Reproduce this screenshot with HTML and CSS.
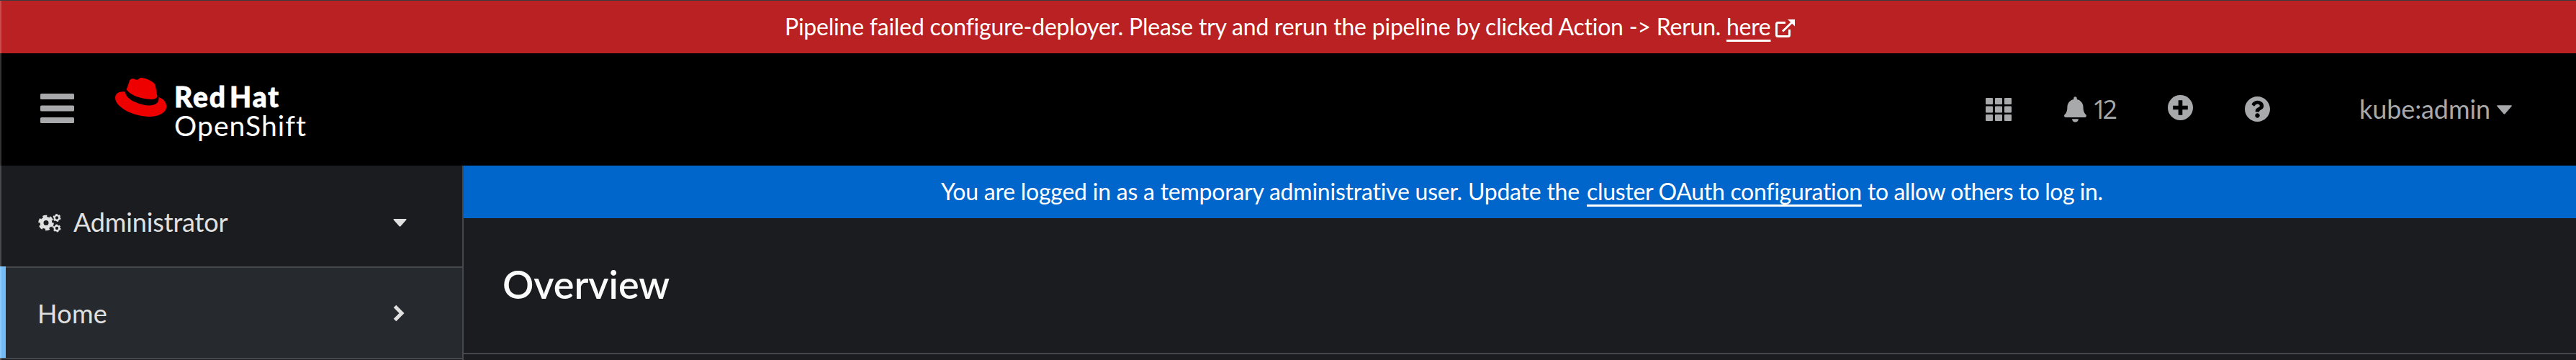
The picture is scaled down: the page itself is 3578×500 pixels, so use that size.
FILE: index.html
```html
<!DOCTYPE html>
<html lang="en"><head><meta charset="utf-8"><title>Overview</title><link rel="stylesheet" href="styles.css"></head>
<body>
<div class="page">
<div class="banner banner-danger"><span class="danger-text">Pipeline failed configure-deployer. Please try and rerun the pipeline by clicked Action -&gt; Rerun.</span><a class="link here">here</a><svg class="ext" viewBox="0 0 27 25" fill="none" stroke="#fff" stroke-width="3"><path d="M14 4.500H3.500Q1.500 4.500 1.500 6.500V21.500Q1.500 23.500 3.500 23.500H17.500Q19.500 23.500 19.500 21.500V14"/><path d="M10 16.500 23 4"/><path d="M17 0H27V9.500Z" fill="#fff" stroke="none"/></svg></div>
<header class="masthead">
<svg class="burger" viewBox="0 0 47 41" fill="#a8a9ab"><rect width="47" height="8" rx="1.500"/><rect y="16.500" width="47" height="8" rx="1.500"/><rect y="33" width="47" height="8" rx="1.500"/></svg>
<svg class="hat" viewBox="0 0 72 54" fill="#e00"><path d="M15.700 16.500 20 4C21 1 24 .500 27 1.800Q30 3.500 32.500 2C34 0 35 0 37 0C43 .800 50 4 54 7.500Q55.500 9 56 12L58.500 26C57 30 51 30.500 44 29.500C32 28 20 23 15.700 16.500Z"/><path d="M14 19.500C4 18.500-1.500 23 .500 31C5 44 28 54 49 54C65 53 72.500 46 71 38C70 32 66 29 60.300 27C61.500 34 57 38.700 46 38.500C30 37 14 29 14 19.500Z"/></svg>
<div class="brand"><span class="redhat">Red Hat</span><span class="openshift">OpenShift</span></div>
<div class="tools">
<svg class="grid" viewBox="0 0 36 32" fill="#a8a9ab"><rect width="10" height="9" rx="1"/><rect x="13" width="10" height="9" rx="1"/><rect x="26" width="10" height="9" rx="1"/><rect y="11.500" width="10" height="9" rx="1"/><rect x="13" y="11.500" width="10" height="9" rx="1"/><rect x="26" y="11.500" width="10" height="9" rx="1"/><rect y="23" width="10" height="9" rx="1"/><rect x="13" y="23" width="10" height="9" rx="1"/><rect x="26" y="23" width="10" height="9" rx="1"/></svg>
<svg class="bell" viewBox="0 0 448 512" fill="#a8a9ab"><path d="M224 512c35.320 0 63.970-28.650 63.970-64H160.030c0 35.350 28.650 64 63.970 64zm215.390-149.710c-19.320-20.760-55.470-51.990-55.470-154.290 0-77.700-54.480-139.900-127.940-155.160V32c0-17.670-14.320-32-31.980-32s-31.980 14.330-31.980 32v20.840C118.560 68.100 64.080 130.300 64.080 208c0 102.300-36.150 133.530-55.470 154.290-6 6.450-8.660 14.160-8.610 21.710.110 16.400 12.980 32 32.100 32h383.800c19.120 0 32-15.600 32.100-32 .050-7.550-2.610-15.270-8.610-21.710z"/></svg>
<span class="count">12</span>
<svg class="plus" viewBox="0 0 34 34"><circle cx="17" cy="17" r="17" fill="#a8a9ab"/><path d="M17 7V27M7 17H27" stroke="#000" stroke-width="5.500"/></svg>
<svg class="help" viewBox="8 8 496 496" fill="#a8a9ab"><path d="M504 256c0 136.997-111.043 248-248 248S8 392.997 8 256C8 119.083 119.043 8 256 8s248 111.083 248 248zM262.655 90c-54.497 0-89.255 22.957-116.549 63.758-3.536 5.286-2.353 12.415 2.715 16.258l34.699 26.310c5.205 3.947 12.621 3.008 16.665-2.122 17.864-22.658 30.113-35.797 57.303-35.797 20.429 0 45.698 13.148 45.698 32.958 0 14.976-12.363 22.667-32.534 33.976C247.128 238.528 216 254.941 216 296v4c0 6.627 5.373 12 12 12h56c6.627 0 12-5.373 12-12v-1.333c0-28.462 83.186-29.647 83.186-106.667 0-58.002-60.165-102-116.531-102zM256 338c-25.365 0-46 20.635-46 46 0 25.364 20.635 46 46 46s46-20.636 46-46c0-25.365-20.635-46-46-46z"/></svg>
<span class="user">kube:admin</span>
<svg class="user-caret" viewBox="0 0 20 12" fill="#a8a9ab"><path d="M1 0H19Q20.500 0 19.500 1.500L11 11.300Q10 12.300 9 11.300L.500 1.500Q-.500 0 1 0Z"/></svg>
</div></header>
<div class="body">
<nav class="sidebar">
<div class="nav-item perspective">
<svg class="cogs" viewBox="0 0 32 26" fill="none" stroke="#e0e0e0"><circle cx="11" cy="12.500" r="6" stroke-width="5"/><circle cx="11" cy="12.500" r="9.200" stroke-width="3.200" stroke-dasharray="5.800 3.834"/><circle cx="26" cy="5.500" r="3.300" stroke-width="2.300"/><circle cx="26" cy="5.500" r="4.700" stroke-width="1.600" stroke-dasharray="2.500 2.422"/><circle cx="26" cy="20" r="3.300" stroke-width="2.300"/><circle cx="26" cy="20" r="4.700" stroke-width="1.600" stroke-dasharray="2.500 2.422"/></svg>
<span class="admin">Administrator</span>
<svg class="nav-caret" viewBox="0 0 20 12" fill="#e0e0e0"><path d="M1 0H19Q20.500 0 19.500 1.500L11 11.300Q10 12.300 9 11.300L.500 1.500Q-.500 0 1 0Z"/></svg>
</div>
<div class="nav-item current"><span class="home">Home</span><svg class="chev" viewBox="0 0 16 24" fill="none" stroke="#e0e0e0" stroke-width="5"><path d="M2.500 2.500 12 12 2.500 21.500"/></svg></div>
</nav>
<main class="main">
<div class="banner banner-info"><span class="info-a">You are logged in as a temporary administrative user. Update the</span><a class="link oauth">cluster OAuth configuration</a><span class="info-b">to allow others to log in.</span></div>
<div class="title"><h1>Overview</h1></div>
</main>
</div>
</div>
</body></html>
```
FILE: styles.css
```css
*{box-sizing:border-box}
html,body{height:500px;overflow:hidden}
body{margin:0;background:#1b1c20;font-family:Lato,"Open Sans",sans-serif;color:#e0e0e0}
svg{display:block;flex:none}
.page{position:relative;width:3578px;height:500px;overflow:hidden;border-top:1px solid #3c3a3d;display:flex;flex-direction:column;white-space:nowrap}
.page::after{content:"";position:absolute;left:0;top:0;bottom:0;width:2px;background:rgba(255,255,255,.2)}
.banner{display:flex;align-items:center;height:73px;font-size:32px;color:#fff;line-height:48px;flex:none;padding-bottom:1px}
.banner-danger{background:#ba2123;padding-left:1090px}
.danger-text{width:1308px;letter-spacing:-.22px}
.banner-info{background:#06c;padding-left:663px}
.info-a{width:897px;letter-spacing:-.23px}
.info-b{letter-spacing:-.45px}
.link{text-decoration:underline;text-decoration-thickness:3px;text-underline-offset:6px}
.here{width:62px;letter-spacing:-.3px}
.oauth{width:390px;letter-spacing:-.3px}
.ext{width:27px;height:25px;margin:5px 0 0 6px}
.masthead{height:156px;background:#000;display:flex;align-items:center;padding-left:56px;flex:none}
.burger{width:47px;height:41px;margin-top:-3px}
.hat{width:72px;height:54px;margin:-34px 0 0 57px}
.brand{display:flex;flex-direction:column;color:#fff;margin:4px 0 0 10px;line-height:40px;font-size:39px}
.redhat{font-weight:900;letter-spacing:1.9px;word-spacing:-7px;-webkit-text-stroke:.8px #fff}
.openshift{letter-spacing:1.1px}
.tools{margin-left:auto;display:flex;align-items:center;color:#a8a9ab;font-size:36px;padding-right:89px}
.grid{width:36px;height:32px}
.bell{width:31px;height:36px;margin-left:73px}
.count{width:34px;margin:0 0 2px 8px;font-family:"Open Sans",sans-serif;letter-spacing:-6px}
.plus{width:35px;height:35px;margin:0 0 5px 71px}
.help{width:35px;height:35px;margin:0 0 1px 72px}
.user{width:188px;margin:0 0 2px 124px;letter-spacing:-.1px}
.user-caret{width:21px;height:13px;margin-left:3px}
.body{flex:1;display:flex;min-height:0}
.sidebar{width:644px;border-right:2px solid #44474b;flex:none}
.nav-item{display:flex;align-items:center;font-size:36px;border-bottom:2px solid #44474b;padding:0 77px 0 53px}
.perspective{height:142px;padding-top:19px}
.current{position:relative;height:127px;background:#26292d;padding:0 80px 0 52px}
.current::before{content:"";position:absolute;left:0;top:-2px;bottom:0;width:8px;background:#73bcf7}
.home{letter-spacing:.3px}
.cogs{width:32px;height:26px}
.admin{margin:-3px 0 0 17px;letter-spacing:-.15px}
.nav-caret{width:19px;height:11px;margin-left:auto}
.chev{width:16px;height:24px;margin-left:auto}
.main{flex:1;min-width:0}
.title{height:189px;display:flex;align-items:center;padding:0 0 4px 54px;border-bottom:2px solid #44474b}
h1{margin:0;color:#fafafa;font-size:54px;font-weight:600}
```
